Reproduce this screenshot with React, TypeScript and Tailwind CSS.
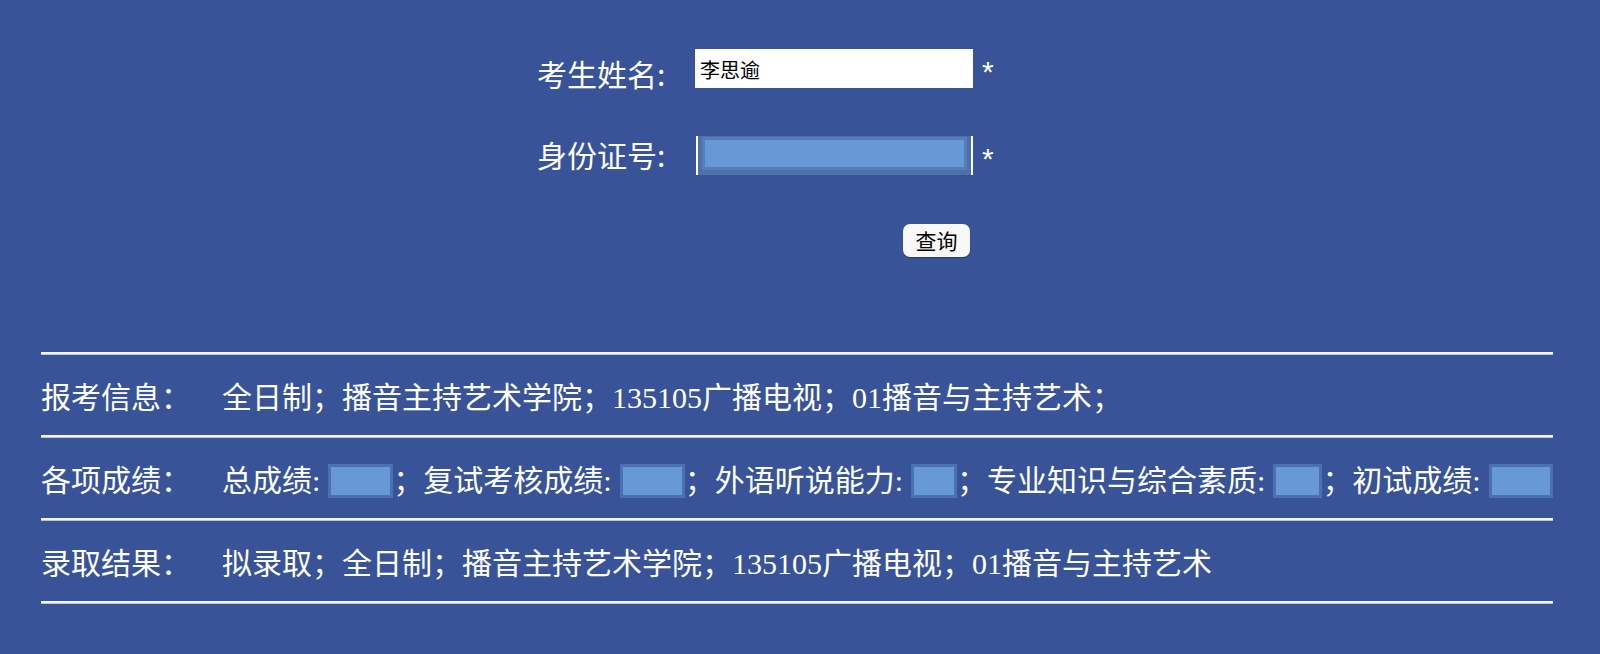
import React from "react";

const FONT = { fontFamily: '"Liberation Serif", "Noto Sans CJK SC", serif' };

function Box({ w }: { w: string }) {
  return <span className={`inline-block ${w} h-[34px] ml-[8px] align-middle border-[3px] border-[#4c71b0] bg-[#6699d6]`} />;
}

function Line() {
  return <div className="h-[3px] w-[1512px] ml-[41px] bg-[#f4f6fb] border-b border-[#b8c4dc]" />;
}

function Row({ label, children }: { label: string; children: React.ReactNode }) {
  return (
    <div className="flex items-center h-[80px] pl-[41px] pt-[5px] text-white text-[30px] leading-none whitespace-nowrap">
      <div className="w-[181px] shrink-0">{label}</div>
      <div className="flex items-center">{children}</div>
    </div>
  );
}

export default function App() {
  return (
    <div className="w-full h-[654px] bg-[#385398] overflow-hidden" style={FONT}>
      <div className="pt-[49px] pl-[537px]">
        <div className="flex items-start h-[39px]">
          <div className="w-[158px] text-white text-[30px] leading-none pt-[9px]" style={{ fontFamily: '"Noto Sans CJK SC", sans-serif' }}>
            考生姓名:
          </div>
          <div className="w-[278px] h-[39px] bg-white flex items-center pl-[5px] pt-[3px] text-black text-[20px]" style={{ fontFamily: '"Noto Sans CJK SC", sans-serif' }}>
            李思逾
          </div>
          <div className="ml-[9px] text-white text-[30px] leading-none pt-[8px]" style={{ fontFamily: '"Liberation Sans", sans-serif' }}>*</div>
        </div>
        <div className="flex items-start h-[39px] mt-[48px]">
          <div className="w-[159px] text-white text-[30px] leading-none pt-[3px]" style={{ fontFamily: '"Noto Sans CJK SC", sans-serif' }}>
            身份证号:
          </div>
          <div className="w-[277px] h-[39px] border-l-2 border-r-2 border-white bg-[#4f6fa9] px-[4px] py-[1px]">
            <div className="w-full h-[33px] border-[3px] border-[#557db8] bg-[#6699d6]" />
          </div>
          <div className="ml-[9px] text-white text-[30px] leading-none pt-[8px]" style={{ fontFamily: '"Liberation Sans", sans-serif' }}>*</div>
        </div>
        <div className="mt-[49px] ml-[366px]">
          <button className="w-[67px] h-[33px] rounded-[7px] bg-[#f8f8f8] text-black text-[21px] leading-none flex items-center justify-center shadow-[0_1px_1px_rgba(0,0,0,0.3)]" style={{ fontFamily: '"Noto Sans CJK SC", sans-serif' }}>
            查询
          </button>
        </div>
      </div>

      <div className="mt-[95px]">
        <Line />
        <Row label="报考信息：">
          <span>全日制；播音主持艺术学院；135105广播电视；01播音与主持艺术；</span>
        </Row>
        <Line />
        <Row label="各项成绩：">
          <span>总成绩:</span>
          <Box w="w-[65px]" />
          <span>；复试考核成绩:</span>
          <Box w="w-[65px]" />
          <span>；外语听说能力:</span>
          <Box w="w-[46px]" />
          <span>；专业知识与综合素质:</span>
          <Box w="w-[49px]" />
          <span>；初试成绩:</span>
          <Box w="w-[64px]" />
        </Row>
        <Line />
        <Row label="录取结果：">
          <span>拟录取；全日制；播音主持艺术学院；135105广播电视；01播音与主持艺术</span>
        </Row>
        <Line />
      </div>
    </div>
  );
}
